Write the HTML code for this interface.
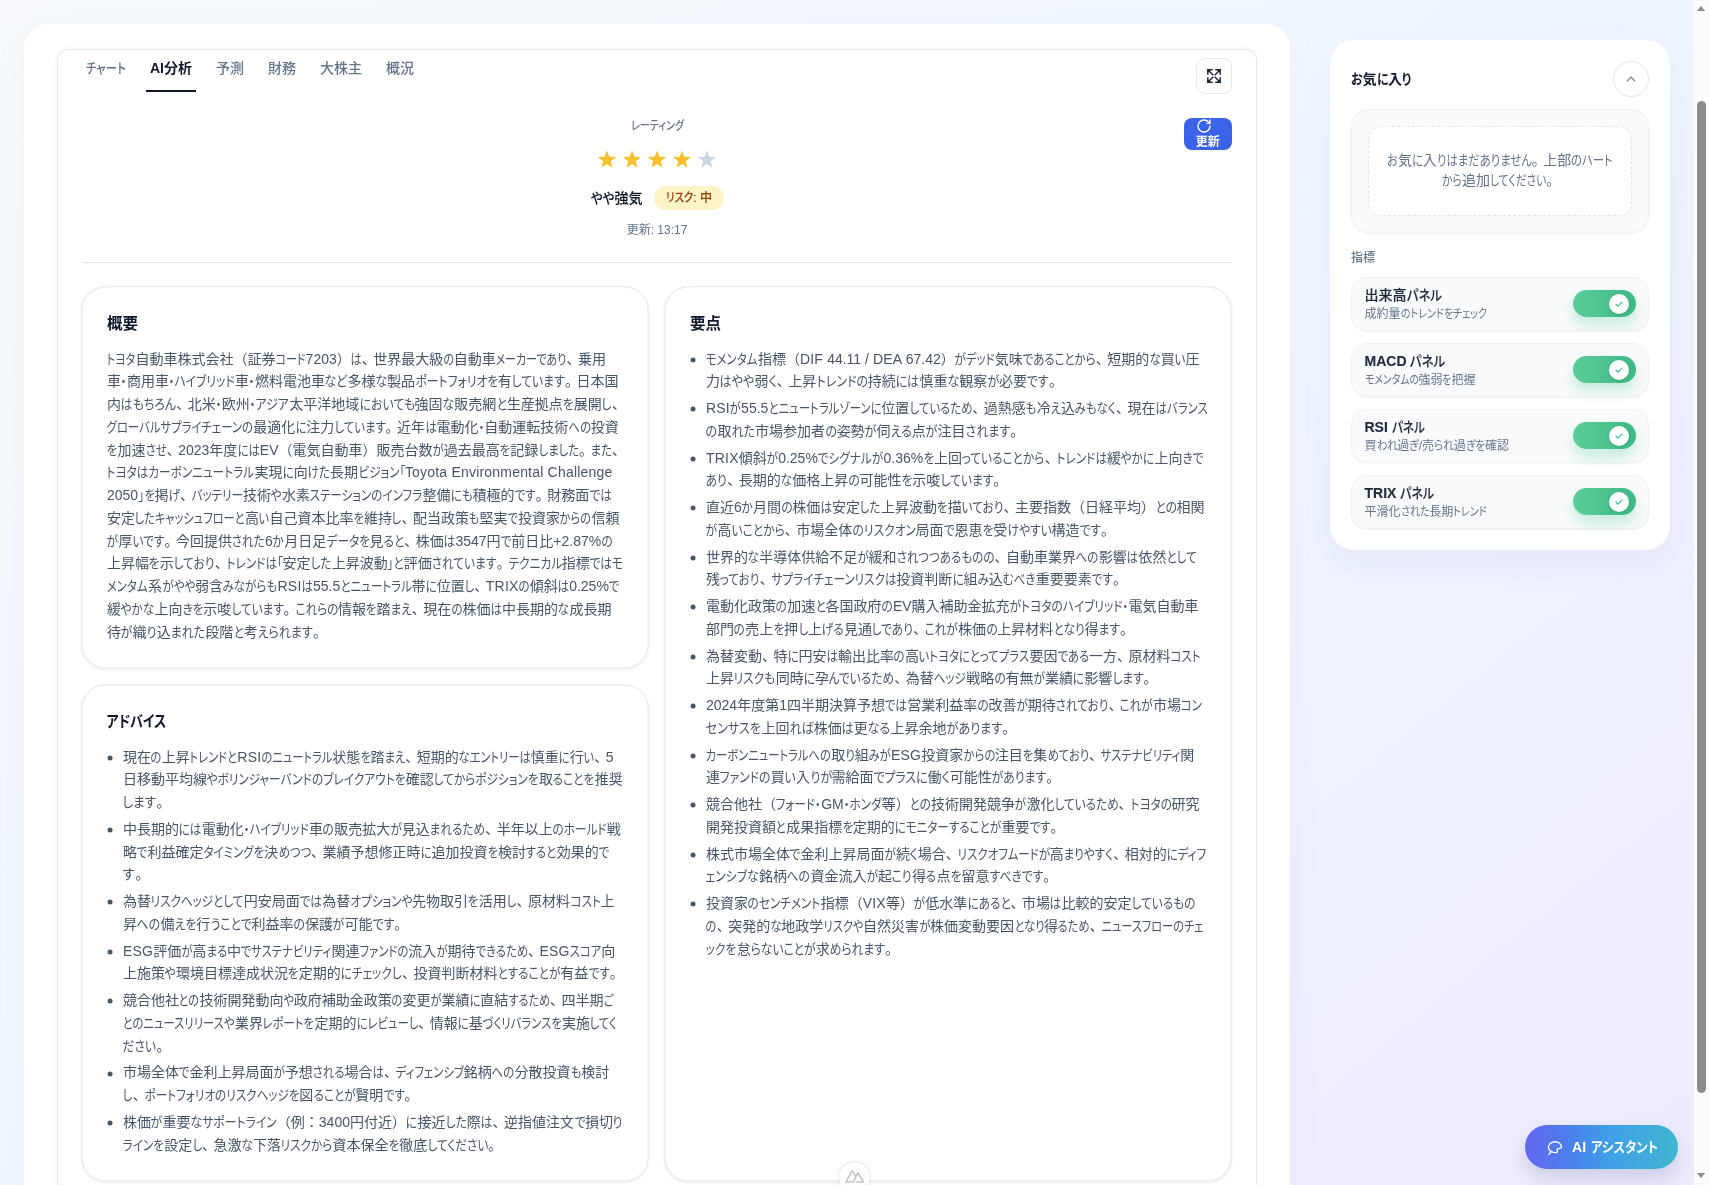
<!DOCTYPE html>
<html lang="ja">
<head>
<meta charset="utf-8">
<title>AI分析</title>
<style>
*{box-sizing:border-box;margin:0;padding:0}
html,body{width:1709px;height:1185px;overflow:hidden}
body{position:relative;font-family:"Liberation Sans","Noto Sans CJK JP",sans-serif;font-size:14px;color:#475569;
background:#f8fafc;-webkit-font-smoothing:antialiased}
ul{list-style:none}
button{border:0;font-family:inherit;padding:0}
.abs{position:absolute}
.bg{position:absolute;left:0;top:-100px;width:1694px;height:1375px;background:linear-gradient(to bottom right,#f8fafc,#eff6ff,#ede9fe)}
#app{position:absolute;left:0;top:0;width:1694px;height:1185px;overflow:hidden;will-change:transform}
/* main card */
.main{position:absolute;left:24px;top:24px;width:1266px;height:1300px;background:#fff;border-radius:24px;box-shadow:0 10px 30px rgba(148,163,184,.08)}
.panel{position:absolute;left:57px;top:49px;width:1200px;height:1300px;border:1px solid #e2e8f0;border-radius:11px;background:#fff;box-shadow:0 0 8px rgba(15,23,42,.035)}
/* tabs */
.tabs{position:absolute;left:82px;top:49px;height:43px}
.tab{position:absolute;top:0;height:43px;padding:8.5px 4px 0;line-height:20px;font-size:14px;font-weight:500;color:#64748b;border-bottom:2px solid transparent;white-space:nowrap}
.tab.on{color:#0f172a;font-weight:700;border-bottom-color:#0f172a}
.iconbtn{position:absolute;left:1196px;top:58px;width:36px;height:36px;border:1px solid #e2e8f0;border-radius:9px;background:#fff;display:flex;align-items:center;justify-content:center}
.refresh{position:absolute;left:1184px;top:118px;width:48px;height:32px;border-radius:8px;background:#3b63e9;color:#fff;font-size:12px;font-weight:700;text-align:center}
.refresh svg{position:absolute;left:12.3px;top:-.4px}
.refresh>span{position:absolute;left:0;width:47.5px;top:16.3px;line-height:16px}
/* rating */
.rating{position:absolute;left:82px;top:110px;width:1150px;text-align:center}
.rating .lbl{position:absolute;left:0;width:100%;top:8px;line-height:16px;font-size:12px;font-weight:500;color:#64748b}
.stars{position:absolute;left:0;width:100%;top:35px;height:28px}
.row{position:absolute;left:0;width:100%;top:77px;height:23px}
.sent{position:absolute;left:509px;top:1px;line-height:20px;font-weight:500;-webkit-text-stroke:.12px #0f172a;color:#0f172a;font-size:14px;white-space:nowrap}
.badge{position:absolute;left:572px;top:-1px;width:70px;height:24px;border-radius:12px;background:#fef3c7;color:#92400e;font-size:12px;font-weight:500;-webkit-text-stroke:.12px #92400e;line-height:24.5px;text-align:center;white-space:nowrap}
.upd{position:absolute;left:0;width:100%;top:112px;line-height:16px;font-size:12px;color:#64748b}
.hr{position:absolute;left:82px;top:262px;width:1150px;height:1px;background:#e2e8f0}
/* cards */
.card{transform:translate(-.45px,-.55px);position:absolute;border:1px solid #e5e9f0;border-radius:24px;background:#fff;box-shadow:0 1px 3px rgba(15,23,42,.07)}
.card h3{position:absolute;left:24.45px;top:25.05px;line-height:24px;font-size:15.5px;font-weight:700;color:#0f172a}
.body{position:absolute;left:24.45px;top:60.6px}
.ln{height:22.75px;line-height:22.75px;white-space:nowrap;font-size:14px;color:#475569}
.k{display:inline-block;transform-origin:0 50%;transform:scaleX(var(--s));white-space:nowrap;font-feature-settings:"palt"}
.e{letter-spacing:.2px}
.item b .e{font-weight:700;letter-spacing:0}
.ln i,.ft i{font-style:normal;letter-spacing:-2.5px}
li{position:relative;padding-left:16px;margin-top:4px}
li:first-child{margin-top:0}
li::before{content:"";position:absolute;left:.1px;top:9.3px;width:5px;height:5px;border-radius:50%;background:#475569}
/* sidebar */
.side{position:absolute;left:1330px;top:40px;width:340px;height:510px;border-radius:24px;background:#fff;box-shadow:0 12px 32px rgba(148,163,184,.12)}
.side h4{position:absolute;left:21px;top:29px;line-height:20px;font-size:14px;font-weight:700;color:#0f172a;white-space:nowrap}
.circ{position:absolute;left:283px;top:21px;width:36px;height:36px;border:1px solid #e2e8f0;border-radius:50%;background:#fff;display:flex;align-items:center;justify-content:center}
.fav{position:absolute;left:21px;top:69px;width:298px;height:124px;border:1px solid #eef1f6;border-radius:18px;background:#f9fafc;box-shadow:0 1px 3px rgba(15,23,42,.05)}
.dash{position:absolute;left:16px;top:16px;width:264px;height:90px;border:1px dashed #e1e6ee;border-radius:14px;background:#fff;text-align:center;color:#64748b;font-size:14px}
.dash div{line-height:19.5px;white-space:nowrap}
.slbl{position:absolute;left:21px;top:209.5px;line-height:16px;font-size:12px;font-weight:500;color:#64748b}
.item{position:absolute;left:21px;width:298px;height:54px;border:1px solid #eef1f6;border-radius:16px;background:#f9fafc;box-shadow:0 1px 2px rgba(15,23,42,.04)}
.item b{position:absolute;left:12.5px;top:7px;line-height:20px;font-size:14px;font-weight:500;-webkit-text-stroke:.12px #1e293b;color:#1e293b;white-space:nowrap}
.item small{position:absolute;left:12.5px;top:28px;line-height:16px;font-size:12px;color:#64748b;white-space:nowrap}
.tg{position:absolute;left:220.8px;top:12px;width:63px;height:27px;border-radius:13.5px;background:linear-gradient(90deg,#5bcd99,#3db983);box-shadow:0 8px 14px rgba(16,185,129,.22)}
.tg i{position:absolute;left:36.5px;top:3.5px;width:20px;height:20px;border-radius:50%;background:#fff;box-shadow:0 1px 3px rgba(0,0,0,.15)}
.tg svg{position:absolute;left:5px;top:5px}
/* floating */
.ai{position:absolute;left:1525px;top:1125px;width:153px;height:44px;border-radius:22px;background:linear-gradient(90deg,#6467f0 0%,#4a80ec 30%,#3f9fe8 55%,#40a9dc 75%,#40b6d2 100%);box-shadow:0 10px 18px rgba(51,65,120,.16);color:#fff;font-weight:700;font-size:14px}
.ai svg{position:absolute;left:22px;top:15px}
.ai>span{position:absolute;left:47px;top:11.6px;line-height:20px;white-space:nowrap}
.nx{position:absolute;left:839.3px;top:1161.5px;width:31px;height:31px;border-radius:50%;background:#fff;box-shadow:0 0 0 1px rgba(0,0,0,.07),0 0 7px rgba(0,0,0,.05)}
.nx svg{position:absolute;left:0;top:0}
/* scrollbar */
.sb{position:absolute;left:1694px;top:0;width:15px;height:1185px;background:#fcfcfc}
.sb .th{position:absolute;left:3px;top:101px;width:9px;height:992px;border-radius:4.5px;background:#8b8b8b}
.sb .up{position:absolute;left:3px;top:6px;width:0;height:0;border-left:4.5px solid transparent;border-right:4.5px solid transparent;border-bottom:5px solid #8b8b8b}
.sb .dn{position:absolute;left:3px;top:1173px;width:0;height:0;border-left:4.5px solid transparent;border-right:4.5px solid transparent;border-top:5px solid #8b8b8b}
</style>
</head>
<body>
<div class="bg"></div>
<div id="app">
<main class="main"></main>
<section class="panel"></section>
<nav class="tabs">
<div class="tab" style="left:0;width:48px"><span class="ft" style="--s:0.8221"><span class="k" style="width:40.00px">チャート</span></span></div><div class="tab on" style="left:64px;width:50px">AI分析</div><div class="tab" style="left:130px">予測</div><div class="tab" style="left:182px">財務</div><div class="tab" style="left:234px">大株主</div><div class="tab" style="left:300px">概況</div>
</nav>
<button class="iconbtn" aria-label="拡大"><svg width="16" height="16" viewBox="0 0 16 16" fill="none" stroke="#1e293b" stroke-width="1.45" stroke-linecap="square" stroke-linejoin="miter"><path d="M1.800 1.800L6.800 6.800M14.200 1.800L9.200 6.800M1.800 14.200L6.800 9.200M14.200 14.200L9.200 9.200"/><path d="M1.800 6V1.800H6M10 1.800h4.200V6M1.800 10v4.200H6M10 14.200h4.200V10" fill="none"/><path d="M1.800 1.800h3.200L1.800 5zM14.200 1.800v3.200L11 1.800zM1.800 14.200v-3.200L5 14.200zM14.200 14.200h-3.200L14.200 11z" fill="#1e293b" stroke="none"/></svg></button>
<button class="refresh"><svg width="16" height="16" viewBox="0 0 24 24" fill="none" stroke="#fff" stroke-width="2" stroke-linecap="round" stroke-linejoin="round"><path d="M21 12a9 9 0 1 1-9-9c2.520 0 4.930 1 6.740 2.740L21 8"/><path d="M21 3v5h-5"/></svg><span>更新</span></button>
<header class="rating">
<div class="lbl"><span class="ft" style="--s:0.8363"><span class="k" style="width:53.00px">レーティング</span></span></div>
<div class="stars"><svg width="1150" height="28" viewBox="0 0 1150 28"><g><polygon points="525.00,5.50 527.29,11.84 534.04,12.06 528.71,16.21 530.58,22.69 525.00,18.90 519.42,22.69 521.29,16.21 515.96,12.06 522.71,11.84" fill="#f9bf2a"/><polygon points="550.00,5.50 552.29,11.84 559.04,12.06 553.71,16.21 555.58,22.69 550.00,18.90 544.42,22.69 546.29,16.21 540.96,12.06 547.71,11.84" fill="#f9bf2a"/><polygon points="575.00,5.50 577.29,11.84 584.04,12.06 578.71,16.21 580.58,22.69 575.00,18.90 569.42,22.69 571.29,16.21 565.96,12.06 572.71,11.84" fill="#f9bf2a"/><polygon points="600.00,5.50 602.29,11.84 609.04,12.06 603.71,16.21 605.58,22.69 600.00,18.90 594.42,22.69 596.29,16.21 590.96,12.06 597.71,11.84" fill="#f9bf2a"/><polygon points="625.00,5.50 627.29,11.84 634.04,12.06 628.71,16.21 630.58,22.69 625.00,18.90 619.42,22.69 621.29,16.21 615.96,12.06 622.71,11.84" fill="#cbd5e1"/></g></svg></div>
<div class="row"><span class="sent"><span class="ft" style="--s:0.8936"><span class="k" style="width:23.50px">やや</span>強気</span></span><span class="badge"><span class="ft" style="--s:0.8692"><span class="k" style="width:27.30px">リスク</span>: 中</span></span></div>
<div class="upd">更新: 13:17</div>
</header>
<div class="hr"></div>
<article class="card" style="left:82px;top:287px;width:567px;height:382px"><h3>概要</h3><div class="body"><div class="ln" style="--s:0.7858"><span class="k" style="width:28.61px">トヨタ</span>自動車株式会社（証券<span class="k" style="width:30.01px">コード</span>7203）<span class="k" style="width:11.00px">は</span><i>、</i>世界最大級<span class="k" style="width:10.61px">の</span>自動車<span class="k" style="width:70.71px">メーカーであり</span><i>、</i>乗用</div><div class="ln" style="--s:0.8438">車<span class="k" style="width:5.91px">・</span>商用車<span class="k" style="width:66.11px">・ハイブリッド</span>車<span class="k" style="width:5.91px">・</span>燃料電池車<span class="k" style="width:22.56px">など</span>多様<span class="k" style="width:11.60px">な</span>製品<span class="k" style="width:82.68px">ポートフォリオを</span>有<span class="k" style="width:53.24px">しています</span><i>。</i>日本国</div><div class="ln" style="--s:0.8517">内<span class="k" style="width:55.37px">はもちろん</span><i>、</i>北米<span class="k" style="width:5.96px">・</span>欧州<span class="k" style="width:39.35px">・アジア</span>太平洋地域<span class="k" style="width:55.48px">においても</span>強固<span class="k" style="width:11.71px">な</span>販売網<span class="k" style="width:10.51px">と</span>生産拠点<span class="k" style="width:11.02px">を</span>展開<span class="k" style="width:10.09px">し</span><i>、</i></div><div class="ln" style="--s:0.8126"><span class="k" style="width:146.38px">グローバルサプライチェーンの</span>最適化<span class="k" style="width:10.96px">に</span>注力<span class="k" style="width:51.27px">しています</span><i>。</i>近年<span class="k" style="width:11.38px">は</span>電動化<span class="k" style="width:5.69px">・</span>自動運転技術<span class="k" style="width:22.53px">への</span>投資</div><div class="ln" style="--s:0.8163"><span class="k" style="width:10.56px">を</span>加速<span class="k" style="width:21.20px">させ</span><i>、</i>2023年度<span class="k" style="width:22.44px">には</span>EV（電気自動車）販売台数<span class="k" style="width:11.20px">が</span>過去最高<span class="k" style="width:10.56px">を</span>記録<span class="k" style="width:40.76px">しました</span><i>。</i><span class="k" style="width:21.44px">また</span><i>、</i></div><div class="ln" style="--s:0.8303"><span class="k" style="width:147.49px">トヨタはカーボンニュートラル</span>実現<span class="k" style="width:11.20px">に</span>向<span class="k" style="width:22.44px">けた</span>長期<span class="k" style="width:46.79px">ビジョン「</span><span class="e">Toyota Environmental Challenge</span></div><div class="ln" style="--s:0.8263">2050<span class="k" style="width:16.46px">」を</span>掲<span class="k" style="width:11.52px">げ</span><i>、</i><span class="k" style="width:51.41px">バッテリー</span>技術<span class="k" style="width:10.87px">や</span>水素<span class="k" style="width:112.57px">ステーションのインフラ</span>整備<span class="k" style="width:22.09px">にも</span>積極的<span class="k" style="width:21.16px">です</span><i>。</i>財務面<span class="k" style="width:22.26px">では</span></div><div class="ln" style="--s:0.8029">安定<span class="k" style="width:110.00px">したキャッシュフローと</span>高<span class="k" style="width:10.61px">い</span>自己資本比率<span class="k" style="width:10.39px">を</span>維持<span class="k" style="width:9.51px">し</span><i>、</i>配当政策<span class="k" style="width:10.64px">も</span>堅実<span class="k" style="width:10.39px">で</span>投資家<span class="k" style="width:31.46px">からの</span>信頼</div><div class="ln" style="--s:0.8328"><span class="k" style="width:11.43px">が</span>厚<span class="k" style="width:31.99px">いです</span><i>。</i>今回提供<span class="k" style="width:33.20px">された</span>6<span class="k" style="width:11.30px">か</span>月日足<span class="k" style="width:43.36px">データを</span>見<span class="k" style="width:20.73px">ると</span><i>、</i>株価<span class="k" style="width:11.66px">は</span>3547円<span class="k" style="width:10.77px">で</span>前日比+2.87%<span class="k" style="width:11.24px">の</span></div><div class="ln" style="--s:0.8349">上昇幅<span class="k" style="width:10.80px">を</span>示<span class="k" style="width:40.87px">しており</span><i>、</i><span class="k" style="width:56.47px">トレンドは「</span>安定<span class="k" style="width:21.03px">した</span>上昇波動<span class="k" style="width:16.15px">」と</span>評価<span class="k" style="width:64.91px">されています</span><i>。</i><span class="k" style="width:53.67px">テクニカル</span>指標<span class="k" style="width:33.60px">ではモ</span></div><div class="ln" style="--s:0.8211"><span class="k" style="width:41.08px">メンタム</span>系<span class="k" style="width:32.85px">がやや</span>弱含<span class="k" style="width:54.63px">みながらも</span><span class="e">RSI</span><span class="k" style="width:11.50px">は</span>55.5<span class="k" style="width:71.34px">とニュートラル</span>帯<span class="k" style="width:11.07px">に</span>位置<span class="k" style="width:9.73px">し</span><i>、</i><span class="e">TRIX</span><span class="k" style="width:11.09px">の</span>傾斜<span class="k" style="width:11.50px">は</span>0.25%<span class="k" style="width:10.62px">で</span></div><div class="ln" style="--s:0.8280">緩<span class="k" style="width:33.50px">やかな</span>上向<span class="k" style="width:20.84px">きを</span>示唆<span class="k" style="width:52.24px">しています</span><i>。</i><span class="k" style="width:42.86px">これらの</span>情報<span class="k" style="width:10.71px">を</span>踏<span class="k" style="width:21.18px">まえ</span><i>、</i>現在<span class="k" style="width:11.18px">の</span>株価<span class="k" style="width:11.59px">は</span>中長期的<span class="k" style="width:11.39px">な</span>成長期</div><div class="ln" style="--s:0.8567">待<span class="k" style="width:11.75px">が</span>織<span class="k" style="width:9.99px">り</span>込<span class="k" style="width:34.51px">まれた</span>段階<span class="k" style="width:10.57px">と</span>考<span class="k" style="width:55.18px">えられます</span><i>。</i></div></div></article>
<article class="card" style="left:82px;top:685px;width:567px;height:497px"><h3><span class="ft" style="--s:.838"><span class="k" style="width:62px">アドバイス</span></span></h3><ul class="body"><li><div class="ln" style="--s:0.8052">現在<span class="k" style="width:10.87px">の</span>上昇<span class="k" style="width:47.48px">トレンドと</span><span class="e">RSI</span><span class="k" style="width:70.89px">のニュートラル</span>状態<span class="k" style="width:10.42px">を</span>踏<span class="k" style="width:20.60px">まえ</span><i>、</i>短期的<span class="k" style="width:72.19px">なエントリーは</span>慎重<span class="k" style="width:10.86px">に</span>行<span class="k" style="width:10.64px">い</span><i>、</i>5</div><div class="ln" style="--s:0.8351">日移動平均線<span class="k" style="width:198.89px">やボリンジャーバンドのブレイクアウトを</span>確認<span class="k" style="width:105.12px">してからポジションを</span>取<span class="k" style="width:41.69px">ることを</span>推奨</div><div class="ln" style="--s:0.8979"><span class="k" style="width:33.60px">します</span><i>。</i></div></li><li><div class="ln" style="--s:0.8321">中長期的<span class="k" style="width:22.87px">には</span>電動化<span class="k" style="width:65.19px">・ハイブリッド</span>車<span class="k" style="width:11.23px">の</span>販売拡大<span class="k" style="width:11.42px">が</span>見込<span class="k" style="width:55.57px">まれるため</span><i>、</i>半年以上<span class="k" style="width:54.12px">のホールド</span>戦</div><div class="ln" style="--s:0.8165">略<span class="k" style="width:10.56px">で</span>利益確定<span class="k" style="width:60.56px">タイミングを</span>決<span class="k" style="width:32.86px">めつつ</span><i>、</i>業績予想修正時<span class="k" style="width:11.01px">に</span>追加投資<span class="k" style="width:10.56px">を</span>検討<span class="k" style="width:30.67px">すると</span>効果的<span class="k" style="width:10.56px">で</span></div><div class="ln" style="--s:0.9785"><span class="k" style="width:12.40px">す</span><i>。</i></div></li><li><div class="ln" style="--s:0.8283">為替<span class="k" style="width:92.89px">リスクヘッジとして</span>円安局面<span class="k" style="width:22.31px">では</span>為替<span class="k" style="width:61.89px">オプションや</span>先物取引<span class="k" style="width:10.72px">を</span>活用<span class="k" style="width:9.81px">し</span><i>、</i>原材料<span class="k" style="width:30.38px">コスト</span>上</div><div class="ln" style="--s:0.8491">昇<span class="k" style="width:23.54px">への</span>備<span class="k" style="width:21.73px">えを</span>行<span class="k" style="width:41.27px">うことで</span>利益率<span class="k" style="width:11.46px">の</span>保護<span class="k" style="width:11.65px">が</span>可能<span class="k" style="width:21.75px">です</span><i>。</i></div></li><li><div class="ln" style="--s:0.8120"><span class="e">ESG</span>評価<span class="k" style="width:11.14px">が</span>高<span class="k" style="width:20.67px">まる</span>中<span class="k" style="width:90.55px">でサステナビリティ</span>関連<span class="k" style="width:48.77px">ファンドの</span>流入<span class="k" style="width:11.14px">が</span>期待<span class="k" style="width:52.58px">できるため</span><i>、</i><span class="e">ESG</span><span class="k" style="width:31.61px">スコア</span>向</div><div class="ln" style="--s:0.8358">上施策<span class="k" style="width:11.00px">や</span>環境目標達成状況<span class="k" style="width:10.81px">を</span>定期的<span class="k" style="width:61.16px">にチェックし</span><i>、</i>投資判断材料<span class="k" style="width:62.92px">とすることが</span>有益<span class="k" style="width:21.41px">です</span><i>。</i></div></li><li><div class="ln" style="--s:0.7949">競合他社<span class="k" style="width:20.43px">との</span>技術開発動向<span class="k" style="width:10.46px">や</span>政府補助金政策<span class="k" style="width:10.73px">の</span>変更<span class="k" style="width:10.90px">が</span>業績<span class="k" style="width:10.72px">に</span>直結<span class="k" style="width:41.74px">するため</span><i>、</i>四半期<span class="k" style="width:9.81px">ご</span></div><div class="ln" style="--s:0.8125"><span class="k" style="width:112.03px">とのニュースリリースや</span>業界<span class="k" style="width:51.46px">レポートを</span>定期的<span class="k" style="width:61.84px">にレビューし</span><i>、</i>情報<span class="k" style="width:10.96px">に</span>基<span class="k" style="width:79.30px">づくリバランスを</span>実施<span class="k" style="width:27.22px">してく</span></div><div class="ln" style="--s:0.8426"><span class="k" style="width:33.60px">ださい</span><i>。</i></div></li><li><div class="ln" style="--s:0.8160">市場全体<span class="k" style="width:10.56px">で</span>金利上昇局面<span class="k" style="width:11.19px">が</span>予想<span class="k" style="width:31.86px">される</span>場合<span class="k" style="width:11.42px">は</span><i>、</i><span class="k" style="width:68.34px">ディフェンシブ</span>銘柄<span class="k" style="width:22.62px">への</span>分散投資<span class="k" style="width:10.81px">も</span>検討</div><div class="ln" style="--s:0.8290"><span class="k" style="width:9.82px">し</span><i>、</i><span class="k" style="width:155.02px">ポートフォリオのリスクヘッジを</span>図<span class="k" style="width:42.03px">ることが</span>賢明<span class="k" style="width:21.23px">です</span><i>。</i></div></li><li><div class="ln" style="--s:0.8463">株価<span class="k" style="width:11.61px">が</span>重要<span class="k" style="width:86.24px">なサポートライン</span>（例：3400円付近）<span class="k" style="width:11.41px">に</span>接近<span class="k" style="width:21.32px">した</span>際<span class="k" style="width:11.85px">は</span><i>、</i>逆指値注文<span class="k" style="width:10.95px">で</span>損切<span class="k" style="width:9.86px">り</span></div><div class="ln" style="--s:0.8280"><span class="k" style="width:41.24px">ラインを</span>設定<span class="k" style="width:9.81px">し</span><i>、</i>急激<span class="k" style="width:11.38px">な</span>下落<span class="k" style="width:51.60px">リスクから</span>資本保全<span class="k" style="width:10.71px">を</span>徹底<span class="k" style="width:60.75px">してください</span><i>。</i></div></li></ul></article>
<article class="card" style="left:665px;top:287px;width:567px;height:895px"><h3>要点</h3><ul class="body"><li><div class="ln" style="--s:0.8197"><span class="k" style="width:51.91px">モメンタム</span>指標（<span class="e">DIF </span>44.11 /<span class="e"> DEA </span>67.42）<span class="k" style="width:40.10px">がデッド</span>気味<span class="k" style="width:73.01px">であることから</span><i>、</i>短期的<span class="k" style="width:11.27px">な</span>買<span class="k" style="width:10.83px">い</span>圧</div><div class="ln" style="--s:0.8577">力<span class="k" style="width:34.56px">はやや</span>弱<span class="k" style="width:8.26px">く</span><i>、</i>上昇<span class="k" style="width:51.58px">トレンドの</span>持続<span class="k" style="width:23.57px">には</span>慎重<span class="k" style="width:11.79px">な</span>観察<span class="k" style="width:11.77px">が</span>必要<span class="k" style="width:21.97px">です</span><i>。</i></div></li><li><div class="ln" style="--s:0.8148"><span class="e">RSI</span><span class="k" style="width:11.18px">が</span>55.5<span class="k" style="width:112.97px">とニュートラルゾーンに</span>位置<span class="k" style="width:63.03px">しているため</span><i>、</i>過熱感<span class="k" style="width:10.80px">も</span>冷<span class="k" style="width:10.32px">え</span>込<span class="k" style="width:40.99px">みもなく</span><i>、</i>現在<span class="k" style="width:52.21px">はバランス</span></div><div class="ln" style="--s:0.8583"><span class="k" style="width:11.59px">の</span>取<span class="k" style="width:23.50px">れた</span>市場参加者<span class="k" style="width:11.59px">の</span>姿勢<span class="k" style="width:11.77px">が</span>伺<span class="k" style="width:21.28px">える</span>点<span class="k" style="width:11.77px">が</span>注目<span class="k" style="width:44.70px">されます</span><i>。</i></div></li><li><div class="ln" style="--s:0.8344"><span class="e">TRIX</span>傾斜<span class="k" style="width:11.45px">が</span>0.25%<span class="k" style="width:65.72px">でシグナルが</span>0.36%<span class="k" style="width:10.79px">を</span>上回<span class="k" style="width:82.80px">っていることから</span><i>、</i><span class="k" style="width:50.60px">トレンドは</span>緩<span class="k" style="width:33.53px">やかに</span>上向<span class="k" style="width:21.00px">きで</span></div><div class="ln" style="--s:0.8379"><span class="k" style="width:21.16px">あり</span><i>、</i>長期的<span class="k" style="width:11.52px">な</span>価格上昇<span class="k" style="width:11.31px">の</span>可能性<span class="k" style="width:10.84px">を</span>示唆<span class="k" style="width:52.87px">しています</span><i>。</i></div></li><li><div class="ln" style="--s:0.8323">直近6<span class="k" style="width:11.29px">か</span>月間<span class="k" style="width:11.24px">の</span>株価<span class="k" style="width:11.65px">は</span>安定<span class="k" style="width:20.96px">した</span>上昇波動<span class="k" style="width:10.77px">を</span>描<span class="k" style="width:41.90px">いており</span><i>、</i>主要指数（日経平均）<span class="k" style="width:21.39px">との</span>相関</div><div class="ln" style="--s:0.8394"><span class="k" style="width:11.52px">が</span>高<span class="k" style="width:53.19px">いことから</span><i>、</i>市場全体<span class="k" style="width:63.34px">のリスクオン</span>局面<span class="k" style="width:10.86px">で</span>恩恵<span class="k" style="width:10.86px">を</span>受<span class="k" style="width:44.24px">けやすい</span>構造<span class="k" style="width:21.50px">です</span><i>。</i></div></li><li><div class="ln" style="--s:0.8234">世界的<span class="k" style="width:11.32px">な</span>半導体供給不足<span class="k" style="width:11.30px">が</span>緩和<span class="k" style="width:97.88px">されつつあるものの</span><i>、</i>自動車業界<span class="k" style="width:22.82px">への</span>影響<span class="k" style="width:11.53px">は</span>依然<span class="k" style="width:30.16px">として</span></div><div class="ln" style="--s:0.8283">残<span class="k" style="width:39.76px">っており</span><i>、</i><span class="k" style="width:125.01px">サプライチェーンリスクは</span>投資判断<span class="k" style="width:11.17px">に</span>組<span class="k" style="width:11.35px">み</span>込<span class="k" style="width:33.00px">むべき</span>重要要素<span class="k" style="width:21.21px">です</span><i>。</i></div></li><li><div class="ln" style="--s:0.8374">電動化政策<span class="k" style="width:11.31px">の</span>加速<span class="k" style="width:10.34px">と</span>各国政府<span class="k" style="width:11.31px">の</span>EV購入補助金拡充<span class="k" style="width:118.86px">がトヨタのハイブリッド・</span>電気自動車</div><div class="ln" style="--s:0.8353">部門<span class="k" style="width:11.28px">の</span>売上<span class="k" style="width:10.81px">を</span>押<span class="k" style="width:9.89px">し</span>上<span class="k" style="width:22.12px">げる</span>見通<span class="k" style="width:41.31px">しであり</span><i>、</i><span class="k" style="width:33.28px">これが</span>株価<span class="k" style="width:11.28px">の</span>上昇材料<span class="k" style="width:31.17px">となり</span>得<span class="k" style="width:21.37px">ます</span><i>。</i></div></li><li><div class="ln" style="--s:0.8147">為替変動<i>、</i>特<span class="k" style="width:10.99px">に</span>円安<span class="k" style="width:11.41px">は</span>輸出比率<span class="k" style="width:11.00px">の</span>高<span class="k" style="width:110.51px">いトヨタにとってプラス</span>要因<span class="k" style="width:31.72px">である</span>一方<i>、</i>原材料<span class="k" style="width:29.88px">コスト</span></div><div class="ln" style="--s:0.8351">上昇<span class="k" style="width:41.65px">リスクも</span>同時<span class="k" style="width:11.26px">に</span>孕<span class="k" style="width:65.45px">んでいるため</span><i>、</i>為替<span class="k" style="width:32.49px">ヘッジ</span>戦略<span class="k" style="width:11.27px">の</span>有無<span class="k" style="width:11.46px">が</span>業績<span class="k" style="width:11.26px">に</span>影響<span class="k" style="width:31.25px">します</span><i>。</i></div></li><li><div class="ln" style="--s:0.8283">2024年度第1四半期決算予想<span class="k" style="width:22.31px">では</span>営業利益率<span class="k" style="width:11.18px">の</span>改善<span class="k" style="width:11.36px">が</span>期待<span class="k" style="width:52.69px">されており</span><i>、</i><span class="k" style="width:33.00px">これが</span>市場<span class="k" style="width:21.32px">コン</span></div><div class="ln" style="--s:0.8633"><span class="k" style="width:55.43px">センサスを</span>上回<span class="k" style="width:24.27px">れば</span>株価<span class="k" style="width:12.09px">は</span>更<span class="k" style="width:22.70px">なる</span>上昇余地<span class="k" style="width:55.71px">があります</span><i>。</i></div></li><li><div class="ln" style="--s:0.8093"><span class="k" style="width:125.39px">カーボンニュートラルへの</span>取<span class="k" style="width:9.43px">り</span>組<span class="k" style="width:22.18px">みが</span><span class="e">ESG</span>投資家<span class="k" style="width:31.71px">からの</span>注目<span class="k" style="width:10.47px">を</span>集<span class="k" style="width:41.67px">めており</span><i>、</i><span class="k" style="width:79.78px">サステナビリティ</span>関</div><div class="ln" style="--s:0.8473">連<span class="k" style="width:50.89px">ファンドの</span>買<span class="k" style="width:11.20px">い</span>入<span class="k" style="width:21.49px">りが</span>需給面<span class="k" style="width:53.99px">でプラスに</span>働<span class="k" style="width:8.16px">く</span>可能性<span class="k" style="width:54.68px">があります</span><i>。</i></div></li><li><div class="ln" style="--s:0.8294">競合他社（<span class="k" style="width:45.21px">フォード・</span>GM<span class="k" style="width:37.98px">・ホンダ</span>等）<span class="k" style="width:21.32px">との</span>技術開発競争<span class="k" style="width:11.38px">が</span>激化<span class="k" style="width:64.16px">しているため</span><i>、</i><span class="k" style="width:41.39px">トヨタの</span>研究</div><div class="ln" style="--s:0.8256">開発投資額<span class="k" style="width:10.19px">と</span>成果指標<span class="k" style="width:10.68px">を</span>定期的<span class="k" style="width:106.58px">にモニターすることが</span>重要<span class="k" style="width:21.14px">です</span><i>。</i></div></li><li><div class="ln" style="--s:0.8226">株式市場全体<span class="k" style="width:10.64px">で</span>金利上昇局面<span class="k" style="width:11.29px">が</span>続<span class="k" style="width:7.92px">く</span>場合<i>、</i><span class="k" style="width:92.53px">リスクオフムードが</span>高<span class="k" style="width:49.36px">まりやすく</span><i>、</i>相対的<span class="k" style="width:39.56px">にディフ</span></div><div class="ln" style="--s:0.8436"><span class="k" style="width:53.06px">ェンシブな</span>銘柄<span class="k" style="width:23.38px">への</span>資金流入<span class="k" style="width:11.57px">が</span>起<span class="k" style="width:20.05px">こり</span>得<span class="k" style="width:10.59px">る</span>点<span class="k" style="width:10.91px">を</span>留意<span class="k" style="width:53.83px">すべきです</span><i>。</i></div></li><li><div class="ln" style="--s:0.8313">投資家<span class="k" style="width:72.74px">のセンチメント</span>指標（<span class="e">VIX</span>等）<span class="k" style="width:11.40px">が</span>低水準<span class="k" style="width:43.20px">にあると</span><i>、</i>市場<span class="k" style="width:11.64px">は</span>比較的安定<span class="k" style="width:63.84px">しているもの</span></div><div class="ln" style="--s:0.8004"><span class="k" style="width:10.81px">の</span><i>、</i>突発的<span class="k" style="width:11.01px">な</span>地政学<span class="k" style="width:39.84px">リスクや</span>自然災害<span class="k" style="width:10.98px">が</span>株価変動要因<span class="k" style="width:29.86px">となり</span>得<span class="k" style="width:31.90px">るため</span><i>、</i><span class="k" style="width:101.90px">ニュースフローのチェ</span></div><div class="ln" style="--s:0.8414"><span class="k" style="width:30.72px">ックを</span>怠<span class="k" style="width:65.01px">らないことが</span>求<span class="k" style="width:55.27px">められます</span><i>。</i></div></li></ul></article>
<aside class="side">
<h4><span class="ft" style="--s:0.8518"><span class="k" style="width:11.55px">お</span>気<span class="k" style="width:11.54px">に</span>入<span class="k" style="width:9.41px">り</span></span></h4>
<button class="circ" aria-label="折りたたむ"><svg width="12" height="12" viewBox="0 0 24 24" fill="none" stroke="#64748b" stroke-width="2.4" stroke-linecap="round" stroke-linejoin="round"><path d="M4.5 15.75l7.5-7.5 7.5 7.5"/></svg></button>
<div class="fav"><div class="dash"><div style="margin-top:24px"><span class="ft" style="--s:0.8109"><span class="k" style="width:10.90px">お</span>気<span class="k" style="width:10.93px">に</span>入<span class="k" style="width:94.90px">りはまだありません</span><i>。</i>上部<span class="k" style="width:41.77px">のハート</span></span></div><div><span class="ft" style="--s:0.7671"><span class="k" style="width:19.72px">から</span>追加<span class="k" style="width:56.28px">してください</span><i>。</i></span></div></div></div>
<div class="slbl">指標</div>
<div class="item" style="top:237.3px"><b><span class="ft" style="--s:0.8812">出来高<span class="k" style="width:35.00px">パネル</span></span></b><small><span class="ft" style="--s:0.8296">成約量<span class="k" style="width:85.98px">のトレンドをチェック</span></span></small><div class="tg"><i><svg width="10" height="10" viewBox="0 0 24 24" fill="none" stroke="#3fbf88" stroke-width="3" stroke-linecap="round" stroke-linejoin="round"><path d="M5 12.5l4.500 4.500L19 7.500"/></svg></i></div></div>
<div class="item" style="top:303.3px"><b><span class="ft" style="--s:0.8839"><span class="e">MACD </span><span class="k" style="width:35.11px">パネル</span></span></b><small><span class="ft" style="--s:0.8184"><span class="k" style="width:53.90px">モメンタムの</span>強弱<span class="k" style="width:9.07px">を</span>把握</span></small><div class="tg"><i><svg width="10" height="10" viewBox="0 0 24 24" fill="none" stroke="#3fbf88" stroke-width="3" stroke-linecap="round" stroke-linejoin="round"><path d="M5 12.5l4.500 4.500L19 7.500"/></svg></i></div></div>
<div class="item" style="top:369.3px"><b><span class="ft" style="--s:0.8249"><span class="e">RSI </span><span class="k" style="width:32.77px">パネル</span></span></b><small><span class="ft" style="--s:0.8795">買<span class="k" style="width:20.67px">われ</span>過<span class="k" style="width:9.48px">ぎ</span>/売<span class="k" style="width:19.72px">られ</span>過<span class="k" style="width:19.22px">ぎを</span>確認</span></small><div class="tg"><i><svg width="10" height="10" viewBox="0 0 24 24" fill="none" stroke="#3fbf88" stroke-width="3" stroke-linecap="round" stroke-linejoin="round"><path d="M5 12.5l4.500 4.500L19 7.500"/></svg></i></div></div>
<div class="item" style="top:435.3px"><b><span class="ft" style="--s:0.8615"><span class="e">TRIX </span><span class="k" style="width:34.22px">パネル</span></span></b><small><span class="ft" style="--s:0.8426">平滑化<span class="k" style="width:28.78px">された</span>長期<span class="k" style="width:33.69px">トレンド</span></span></small><div class="tg"><i><svg width="10" height="10" viewBox="0 0 24 24" fill="none" stroke="#3fbf88" stroke-width="3" stroke-linecap="round" stroke-linejoin="round"><path d="M5 12.5l4.500 4.500L19 7.500"/></svg></i></div></div>
</aside>
<button class="ai"><svg width="16" height="16" viewBox="0 0 16 16" fill="none" stroke="#fff" stroke-width="1.35" stroke-linecap="round" stroke-linejoin="round"><path d="M14.440 7.600A6.500 5.460 0 1 0 10.200 12.300L10.350 9.150Z"/><path d="M4 11.800L1.900 14.400"/></svg><span><span class="ft" style="--s:0.8819"><span class="e">AI </span><span class="k" style="width:67.00px">アシスタント</span></span></span></button>
<div class="nx"><svg width="31" height="31" viewBox="0 0 31 31" fill="none" stroke="#c4c4c4" stroke-width="1.6" stroke-linejoin="round" stroke-linecap="round"><path d="M17.300 20H24.500L19 10.800L16.750 14.700L13.300 8.600L6.900 20H13.300C14.200 20 14.800 19.500 15.300 18.600L16.750 14.700"/></svg></div>
</div>
<div class="sb"><div class="up"></div><div class="th"></div><div class="dn"></div></div>
</body>
</html>
